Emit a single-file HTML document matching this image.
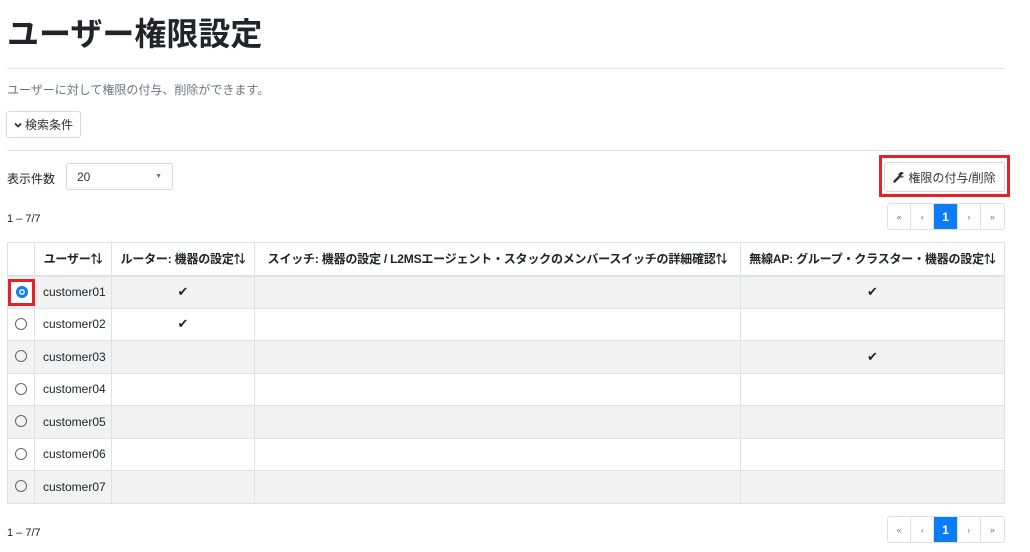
<!DOCTYPE html>
<html><head><meta charset="utf-8"><style>
*{box-sizing:border-box;margin:0;padding:0}
body{width:1030px;height:552px;background:#fff;font-family:"Liberation Sans","Noto Sans CJK JP",sans-serif;color:#212529;position:relative;overflow:hidden;font-size:12px}
.a{position:absolute}
h1{position:absolute;left:7px;top:14px;font-size:32px;font-weight:bold;line-height:40px}
.hr{position:absolute;left:7px;width:997px;height:1px;background:#e2e4e6}
.btn{border:1px solid #d6d9dc;border-radius:3px;background:#fff;display:flex;align-items:center;justify-content:center;font-size:12px;color:#333}
.pg{position:absolute;display:flex;border:1px solid #dee2e6;border-radius:3px;height:27px;width:118px;overflow:hidden}
.pg div{width:23.5px;display:flex;align-items:center;justify-content:center;font-size:9px;color:#777;border-right:1px solid #dee2e6}
.pg div:last-child{border-right:none}
.pg .on{background:#0d7cf8;color:#fff;font-size:12px;font-weight:bold}
table{position:absolute;left:7px;top:242px;border-collapse:collapse;width:998px;font-size:12px;table-layout:fixed}
td,th{border:1px solid #dee2e6;height:32.5px;padding:0 8px;white-space:nowrap}
th{font-weight:bold;height:33px;border-bottom:2px solid #dee2e6;text-align:center;padding:0 2px;letter-spacing:-0.2px}
tbody tr:nth-child(odd){background:#f2f2f2}
.c{text-align:center;font-size:13px}
.r{display:inline-block;width:12px;height:12px;border:1px solid #666;border-radius:50%;vertical-align:middle;margin-top:-3px}
</style></head><body>
<h1>ユーザー権限設定</h1>
<div class="hr" style="top:68px"></div>
<div class="a" style="left:7px;top:81px;font-size:12px;color:#6c757d">ユーザーに対して権限の付与、削除ができます。</div>
<div class="a btn" style="left:6px;top:111px;width:75px;height:27px"><svg width="8" height="6" viewBox="0 0 8 6" style="margin-right:3px"><path d="M1 1.5L4 4.5L7 1.5" stroke="#333" stroke-width="1.8" fill="none"/></svg>検索条件</div>
<div class="hr" style="top:150px"></div>
<div class="a" style="left:7px;top:170px">表示件数</div>
<div class="a btn" style="left:66px;top:163px;width:107px;height:27px;justify-content:space-between;padding:0 10px">20<span style="font-size:7px;color:#777">▼</span></div>
<div class="a" style="left:879px;top:155px;width:131px;height:42px;border:3px solid #e8202a"></div>
<div class="a btn" style="left:884px;top:162px;width:121px;height:30px"><svg width="12" height="12" viewBox="0 0 12 12" style="margin-right:3px"><path d="M1.5 10.5L6 6" stroke="#333" stroke-width="2.4" stroke-linecap="round"/><path d="M5.5 4.5A3 3 0 0 1 10.8 2.2L8.8 3.5L8.5 5.5L10.5 5.2L11.4 3.8A3 3 0 0 1 7.5 6.5Z" fill="#333"/></svg>権限の付与/削除</div>
<div class="a" style="left:7px;top:213px;font-size:11px">1 – 7/7</div>
<div class="pg" style="left:887px;top:203px"><div>«</div><div>‹</div><div class="on">1</div><div>›</div><div>»</div></div>
<table>
<colgroup><col style="width:27px"><col style="width:77px"><col style="width:143px"><col style="width:486px"><col></colgroup>
<thead><tr><th></th><th>ユーザー⇅</th><th>ルーター: 機器の設定⇅</th><th>スイッチ: 機器の設定 / L2MSエージェント・スタックのメンバースイッチの詳細確認⇅</th><th>無線AP: グループ・クラスター・機器の設定⇅</th></tr></thead>
<tbody>
<tr><td style="padding:0;position:relative"><div class="a" style="left:0;top:2px;width:27px;height:27px;border:3px solid #e8202a;background:#fff;display:flex;align-items:center;justify-content:center"><span class="r" style="margin-top:0;border:3.5px solid #0d7cf8;box-shadow:inset 0 0 0 1.5px #fff;background:#0d7cf8"></span></div></td><td>customer01</td><td class="c">✔</td><td></td><td class="c">✔</td></tr>
<tr><td style="text-align:center;padding:0"><span class="r"></span></td><td>customer02</td><td class="c">✔</td><td></td><td></td></tr>
<tr><td style="text-align:center;padding:0"><span class="r"></span></td><td>customer03</td><td></td><td></td><td class="c">✔</td></tr>
<tr><td style="text-align:center;padding:0"><span class="r"></span></td><td>customer04</td><td></td><td></td><td></td></tr>
<tr><td style="text-align:center;padding:0"><span class="r"></span></td><td>customer05</td><td></td><td></td><td></td></tr>
<tr><td style="text-align:center;padding:0"><span class="r"></span></td><td>customer06</td><td></td><td></td><td></td></tr>
<tr><td style="text-align:center;padding:0"><span class="r"></span></td><td>customer07</td><td></td><td></td><td></td></tr>
</tbody></table>
<div class="a" style="left:7px;top:527px;font-size:11px">1 – 7/7</div>
<div class="pg" style="left:887px;top:516px"><div>«</div><div>‹</div><div class="on">1</div><div>›</div><div>»</div></div>
</body></html>
